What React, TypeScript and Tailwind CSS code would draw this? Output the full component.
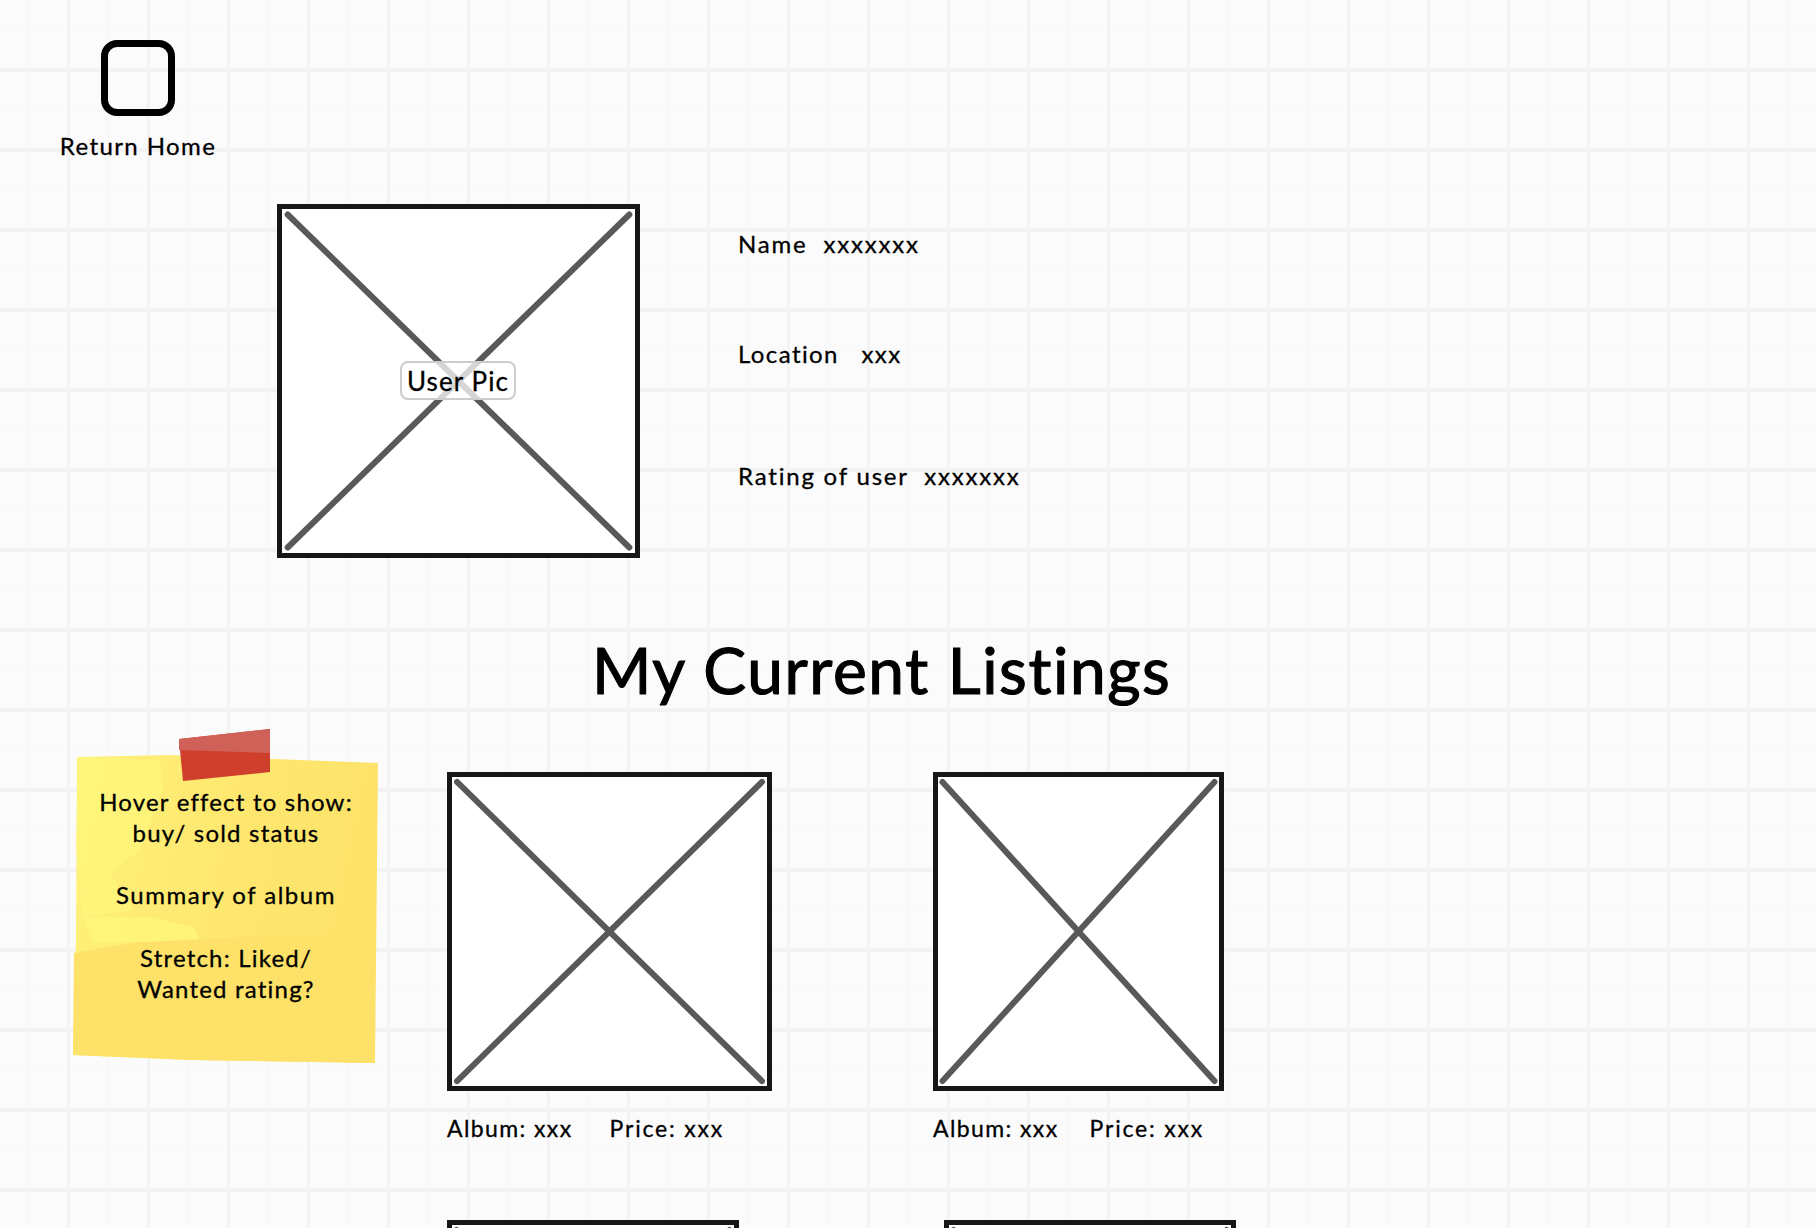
const font = "font-['Lato','Liberation_Sans',sans-serif]";

function Box({ w, h, className = "", children }: { w: string; h: string; className?: string; children?: React.ReactNode }) {
  return (
    <div className={`relative shrink-0 border-[5px] border-[#161616] bg-white ${w} ${h} ${className}`}>
      <svg className="absolute inset-0 h-full w-full" viewBox="0 0 100 100" preserveAspectRatio="none">
        <line x1="1.6" y1="1.6" x2="98.4" y2="98.4" stroke="#595959" strokeWidth="6" strokeLinecap="round" vectorEffect="non-scaling-stroke" />
        <line x1="98.4" y1="1.6" x2="1.6" y2="98.4" stroke="#595959" strokeWidth="6" strokeLinecap="round" vectorEffect="non-scaling-stroke" />
      </svg>
      {children}
    </div>
  );
}

function Caption({ gap }: { gap: string }) {
  return (
    <div className={`mt-[23px] flex text-[23px] leading-[28px] tracking-[1.4px] text-black ${gap}`}>
      <span>Album: xxx</span>
      <span className="tracking-[1.8px]">Price: xxx</span>
    </div>
  );
}

function Sticky() {
  return (
    <div className="relative ml-[73px] mt-[-45px] h-[340px] w-[306px] shrink-0">
      <svg className="absolute inset-0 h-full w-full" viewBox="0 0 306 340">
        <defs>
          <linearGradient id="note" x1="0" y1="0" x2="1" y2="0.2">
            <stop offset="0" stopColor="#fff27a" />
            <stop offset="0.5" stopColor="#fee870" />
            <stop offset="1" stopColor="#fde269" />
          </linearGradient>
        </defs>
        <polygon points="4,30 100,28 305,36 302,336 120,333 0,328 3,210" fill="url(#note)" />
        <polygon points="5,30 87,33 90,60 67,123 37,146 60,183 10,190 3,120" fill="#fff67c" opacity="0.7" />
        <polygon points="10,190 77,190 120,200 127,213 20,216" fill="#fff67c" opacity="0.8" />
        <polygon points="1,226 60,216 130,212 302,205 302,336 120,333 0,328" fill="#fde168" />
        <polygon points="106,12 197,2 197,45 110,54" fill="#d03e2c" />
        <polygon points="106,12 197,2 197,26 106,23" fill="#cf6158" />
      </svg>
      <div className="relative flex flex-col items-center pt-[59px] text-center text-[24px] leading-[31px] tracking-[1.2px] text-black">
        <p>Hover effect to show:</p>
        <p>buy/ sold status</p>
        <p className="mt-[31px] tracking-[1.5px]">Summary of album</p>
        <p className="mt-[32px]">Stretch: Liked/</p>
        <p>Wanted rating?</p>
      </div>
    </div>
  );
}

export default function App() {
  return (
    <div className={`${font} relative h-[1228px] w-[1816px] overflow-hidden bg-[#fbfbfb] [-webkit-text-stroke:0.3px_black] bg-[linear-gradient(to_right,#f3f3f3_3px,transparent_3px),linear-gradient(to_bottom,#f3f3f3_4px,transparent_4px),linear-gradient(to_right,#f7f7f7_1px,transparent_1px),linear-gradient(to_bottom,#f7f7f7_1px,transparent_1px)] bg-[size:80px_80px,80px_80px,40px_40px,40px_40px] bg-[position:67px_0,0_68px,28px_0,0_30px]`}>
      <div className="ml-[61px] flex w-[154px] flex-col items-center pt-[40px]">
        <div className="h-[76px] w-[74px] rounded-[16px] border-[7px] border-black" />
        <div className="mt-[16px] whitespace-nowrap text-[24px] leading-[28px] tracking-[1.4px] text-black">Return Home</div>
      </div>

      <div className="ml-[277px] mt-[44px] flex">
        <Box w="w-[363px]" h="h-[354px]">
          <div className="absolute left-[118px] top-[152px] flex h-[39px] w-[116px] items-center justify-center rounded-[8px] border-2 border-[#cccccc] bg-white/75 text-[26px] leading-none tracking-[1.1px] text-black">
            User Pic
          </div>
        </Box>
        <div className="ml-[98px] flex flex-col text-[24px] leading-[28px] tracking-[1.8px] text-black">
          <p className="mt-[26px] whitespace-pre">Name  xxxxxxx</p>
          <p className="mt-[82px] whitespace-pre tracking-[1.4px]">Location   xxx</p>
          <p className="mt-[94px] whitespace-pre">Rating of user  xxxxxxx</p>
        </div>
      </div>

      <h1 className="ml-[592px] mt-[74px] text-[64px] leading-[76px] tracking-[1.6px] text-black [-webkit-text-stroke:1.2px_black]">My Current Listings</h1>

      <div className="mt-[64px] flex items-start">
        <Sticky />
        <div className="ml-[68px] flex flex-col">
          <Box w="w-[325px]" h="h-[319px]" />
          <Caption gap="gap-[37px]" />
          <Box w="w-[292px]" h="h-[319px]" className="mt-[78px]" />
        </div>
        <div className="ml-[161px] flex flex-col">
          <Box w="w-[291px]" h="h-[319px]" />
          <Caption gap="gap-[31px]" />
          <Box w="w-[292px]" h="h-[319px]" className="ml-[11px] mt-[78px]" />
        </div>
      </div>
    </div>
  );
}
